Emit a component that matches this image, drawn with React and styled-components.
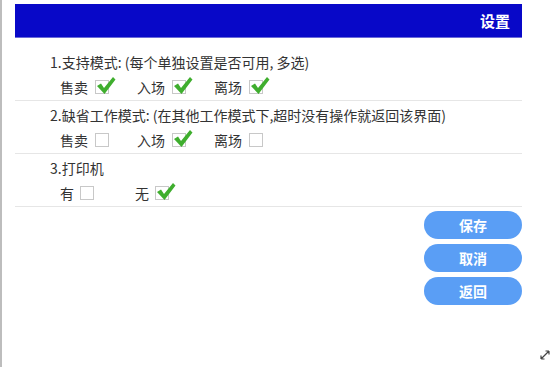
import React, { useState } from "react";
import styled, { createGlobalStyle } from "styled-components";

const GlobalStyle = createGlobalStyle`
  body {
    margin: 0;
    background: #fff;
    font-family: "Noto Sans CJK SC", "Noto Sans", sans-serif;
    color: #333;
  }
`;

const Page = styled.div`
  position: relative;
  box-sizing: border-box;
  width: 554px;
  height: 367px;
  border-left: 2px solid #bdbdbd;
  padding: 4px 0 0 13px;
`;

const Panel = styled.div`
  width: 507px;
`;

const Header = styled.div`
  box-sizing: border-box;
  height: 34px;
  background: #0808c8;
  border-bottom: 1px solid #6a6ad8;
  display: flex;
  align-items: center;
  justify-content: flex-end;
  padding-right: 12px;
  color: #fff;
  font-size: 15px;
  font-weight: bold;
  margin-bottom: 10px;
`;

const Section = styled.div`
  padding-top: 3px;
  border-bottom: 1px solid #e6e6e6;
`;

const Title = styled.div`
  height: 23px;
  line-height: 23px;
  padding-left: 35px;
  font-size: 14px;
  white-space: nowrap;
`;

const OptionRow = styled.div`
  height: 26px;
  display: flex;
  align-items: center;
  padding-left: 45px;
`;

const Option = styled.label`
  width: ${(p) => p.$width}px;
  display: flex;
  align-items: center;
  font-size: 14px;
  cursor: pointer;
`;

const Box = styled.span`
  position: relative;
  box-sizing: border-box;
  width: 14px;
  height: 14px;
  margin-left: ${(p) => p.$gap}px;
  border: 1px solid #c8c8c8;
  background: #fff;
`;

const Tick = styled.svg`
  position: absolute;
  left: 0;
  top: -6px;
  width: 20px;
  height: 20px;
`;

const Buttons = styled.div`
  display: flex;
  flex-direction: column;
  align-items: flex-end;
  gap: 5px;
  padding-top: 4px;
`;

const Button = styled.button`
  width: 98px;
  height: 28px;
  border: none;
  border-radius: 14px;
  background: #5a9ef5;
  color: #fff;
  font-family: inherit;
  font-size: 14px;
  font-weight: bold;
  cursor: pointer;
`;

const Resize = styled.svg`
  position: absolute;
  right: 4px;
  bottom: 7px;
  width: 10px;
  height: 10px;
`;

function Check({ checked, onToggle, gap }) {
  return (
    <Box $gap={gap} onClick={onToggle}>
      {checked && (
        <Tick viewBox="0 0 20 20">
          <path d="M1 11 L5 8.5 L8 13 L17 2 L19.5 4.5 L8.5 19 Z" fill="#3fae2e" />
        </Tick>
      )}
    </Box>
  );
}

const sections = [
  {
    key: "mode",
    title: "1.支持模式: (每个单独设置是否可用, 多选)",
    options: ["售卖", "入场", "离场"],
    width: 77,
    gap: 7,
    init: [true, true, true],
  },
  {
    key: "default",
    title: "2.缺省工作模式: (在其他工作模式下,超时没有操作就返回该界面)",
    options: ["售卖", "入场", "离场"],
    width: 77,
    gap: 7,
    init: [false, true, false],
  },
  {
    key: "printer",
    title: "3.打印机",
    options: ["有", "无"],
    width: 75,
    gap: 6,
    init: [false, true],
  },
];

export default function App() {
  const [values, setValues] = useState(
    Object.fromEntries(sections.map((s) => [s.key, s.init]))
  );

  const toggle = (key, i) =>
    setValues((v) => ({
      ...v,
      [key]: v[key].map((c, j) => (j === i ? !c : c)),
    }));

  return (
    <Page>
      <GlobalStyle />
      <Panel>
        <Header>设置</Header>
        {sections.map((s) => (
          <Section key={s.key}>
            <Title>{s.title}</Title>
            <OptionRow>
              {s.options.map((o, i) => (
                <Option key={o} $width={s.width}>
                  {o}
                  <Check
                    gap={s.gap}
                    checked={values[s.key][i]}
                    onToggle={() => toggle(s.key, i)}
                  />
                </Option>
              ))}
            </OptionRow>
          </Section>
        ))}
        <Buttons>
          <Button>保存</Button>
          <Button>取消</Button>
          <Button>返回</Button>
        </Buttons>
      </Panel>
      <Resize viewBox="0 0 10 10">
        <path d="M1 9 L9 1 M1 9 L1 5.5 M1 9 L4.5 9 M9 1 L5.5 1 M9 1 L9 4.5" stroke="#444" strokeWidth="1.2" fill="none" />
      </Resize>
    </Page>
  );
}
